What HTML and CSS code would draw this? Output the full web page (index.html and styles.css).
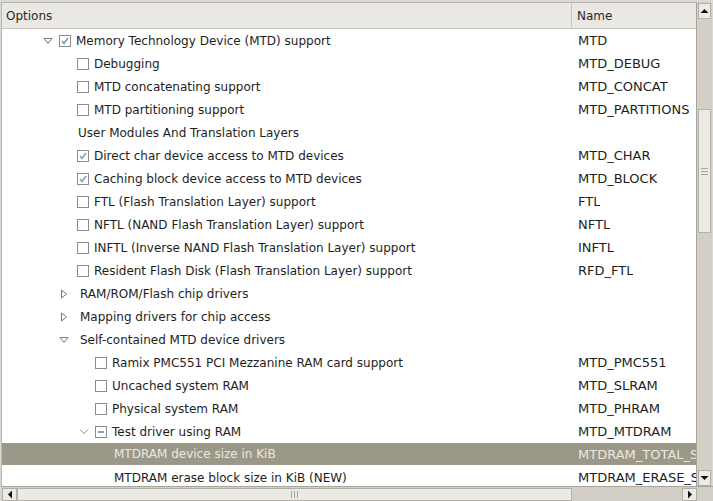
FILE: index.html
```html
<!DOCTYPE html>
<html>
<head>
<meta charset="utf-8">
<link rel="stylesheet" href="styles.css">
</head>
<body>
<div class="window">
  <div class="main">
    <div class="table">
      <div class="head">
        <div class="hcell opt">Options</div>
        <div class="hcell name">Name</div>
      </div>
      <div class="rows">
        <div class="row"><div class="opt r1"><span class="exp"><svg width="10" height="8" viewBox="0 0 10 8"><path d="M1 1.5 H9 L5 6.5 Z" fill="#fff" stroke="#777" stroke-width="1"/></svg></span><span class="cb on"><svg width="10" height="10" viewBox="0 0 10 10"><path d="M2 5 L4 7.5 L8 2" fill="none" stroke="#7d95b8" stroke-width="1.6"/></svg></span><span class="lab">Memory Technology Device (MTD) support</span></div><div class="name">MTD</div></div>
        <div class="row"><div class="opt l2"><span class="cb"></span><span class="lab">Debugging</span></div><div class="name">MTD_DEBUG</div></div>
        <div class="row"><div class="opt l2"><span class="cb"></span><span class="lab">MTD concatenating support</span></div><div class="name">MTD_CONCAT</div></div>
        <div class="row"><div class="opt l2"><span class="cb"></span><span class="lab">MTD partitioning support</span></div><div class="name">MTD_PARTITIONS</div></div>
        <div class="row"><div class="opt l2t"><span class="lab">User Modules And Translation Layers</span></div><div class="name"></div></div>
        <div class="row"><div class="opt l2"><span class="cb on"><svg width="10" height="10" viewBox="0 0 10 10"><path d="M2 5 L4 7.5 L8 2" fill="none" stroke="#8f9cae" stroke-width="1.6"/></svg></span><span class="lab">Direct char device access to MTD devices</span></div><div class="name">MTD_CHAR</div></div>
        <div class="row"><div class="opt l2"><span class="cb on"><svg width="10" height="10" viewBox="0 0 10 10"><path d="M2 5 L4 7.5 L8 2" fill="none" stroke="#8f9cae" stroke-width="1.6"/></svg></span><span class="lab">Caching block device access to MTD devices</span></div><div class="name">MTD_BLOCK</div></div>
        <div class="row"><div class="opt l2"><span class="cb"></span><span class="lab">FTL (Flash Translation Layer) support</span></div><div class="name">FTL</div></div>
        <div class="row"><div class="opt l2"><span class="cb"></span><span class="lab">NFTL (NAND Flash Translation Layer) support</span></div><div class="name">NFTL</div></div>
        <div class="row"><div class="opt l2"><span class="cb"></span><span class="lab">INFTL (Inverse NAND Flash Translation Layer) support</span></div><div class="name">INFTL</div></div>
        <div class="row"><div class="opt l2"><span class="cb"></span><span class="lab">Resident Flash Disk (Flash Translation Layer) support</span></div><div class="name">RFD_FTL</div></div>
        <div class="row"><div class="opt l2e"><span class="exp2"><svg width="8" height="10" viewBox="0 0 8 10"><path d="M1.5 1 V9 L6.5 5 Z" fill="#fff" stroke="#777" stroke-width="1"/></svg></span><span class="lab">RAM/ROM/Flash chip drivers</span></div><div class="name"></div></div>
        <div class="row"><div class="opt l2e"><span class="exp2"><svg width="8" height="10" viewBox="0 0 8 10"><path d="M1.5 1 V9 L6.5 5 Z" fill="#fff" stroke="#777" stroke-width="1"/></svg></span><span class="lab">Mapping drivers for chip access</span></div><div class="name"></div></div>
        <div class="row"><div class="opt l2e"><span class="exp2"><svg width="10" height="8" viewBox="0 0 10 8"><path d="M1 1.5 H9 L5 6.5 Z" fill="#fff" stroke="#777" stroke-width="1"/></svg></span><span class="lab">Self-contained MTD device drivers</span></div><div class="name"></div></div>
        <div class="row"><div class="opt l3"><span class="cb"></span><span class="lab">Ramix PMC551 PCI Mezzanine RAM card support</span></div><div class="name">MTD_PMC551</div></div>
        <div class="row"><div class="opt l3"><span class="cb"></span><span class="lab">Uncached system RAM</span></div><div class="name">MTD_SLRAM</div></div>
        <div class="row"><div class="opt l3"><span class="cb"></span><span class="lab">Physical system RAM</span></div><div class="name">MTD_PHRAM</div></div>
        <div class="row"><div class="opt l3e"><span class="exp3"><svg width="10" height="8" viewBox="0 0 10 8"><path d="M1 1.5 L5 5.5 L9 1.5" fill="none" stroke="#888" stroke-width="1"/></svg></span><span class="cb on"><svg width="10" height="10" viewBox="0 0 10 10"><path d="M2 5 H8" fill="none" stroke="#6f86a8" stroke-width="1.6"/></svg></span><span class="lab">Test driver using RAM</span></div><div class="name">MTD_MTDRAM</div></div>
        <div class="row sel"><div class="opt l3t"><span class="lab">MTDRAM device size in KiB</span></div><div class="name">MTDRAM_TOTAL_SIZE</div></div>
        <div class="row"><div class="opt l3t"><span class="lab">MTDRAM erase block size in KiB (NEW)</span></div><div class="name">MTDRAM_ERASE_SIZE</div></div>
      </div>
    </div>
    <div class="vscroll">
      <div class="btn"><svg width="9" height="6" viewBox="0 0 9 6"><path d="M0.5 5 L4.5 1 L8.5 5 Z" fill="#111"/></svg></div>
      <div class="vtrack">
        <div class="vthumb"><span class="grip-h"></span><span class="grip-h"></span><span class="grip-h"></span></div>
      </div>
      <div class="btn"><svg width="9" height="6" viewBox="0 0 9 6"><path d="M0.5 1 L4.5 5 L8.5 1 Z" fill="#111"/></svg></div>
    </div>
  </div>
  <div class="hscroll">
    <div class="hbtn"><svg width="6" height="9" viewBox="0 0 6 9"><path d="M5 0.5 L1 4.5 L5 8.5 Z" fill="#111"/></svg></div>
    <div class="htrack">
      <div class="hthumb"><span class="grip-v"></span><span class="grip-v"></span><span class="grip-v"></span></div>
    </div>
    <div class="hbtn"><svg width="6" height="9" viewBox="0 0 6 9"><path d="M1 0.5 L5 4.5 L1 8.5 Z" fill="#111"/></svg></div>
    <div class="corner"></div>
  </div>
</div>
</body>
</html>
```

FILE: styles.css
```css
html, body {
  margin: 0;
  padding: 0;
  background: #dcd9d3;
}
.window {
  width: 713px;
  height: 501px;
  box-sizing: border-box;
  padding: 2px 0 0 1px;
  background: #dcd9d3;
  display: flex;
  flex-direction: column;
  font-family: "DejaVu Sans", sans-serif;
  font-size: 12px;
  color: #1e1e1e;
  overflow: hidden;
}
.main {
  display: flex;
  height: 484px;
}
.table {
  width: 695px;
  box-sizing: border-box;
  border-left: 1px solid #b9b6ae;
  border-top: 1px solid #b9b6ae;
  background: #fff;
  overflow: hidden;
  display: flex;
  flex-direction: column;
}
.head {
  display: flex;
  height: 26px;
  flex: none;
  background: #eae8e4;
  border-bottom: 1px solid #c7c4bc;
  box-sizing: border-box;
}
.hcell {
  display: flex;
  align-items: center;
  color: #2a2a2a;
}
.hcell.opt {
  width: 570px;
  padding-left: 4px;
  box-sizing: border-box;
  border-right: 1px solid #c9c6be;
}
.hcell.name {
  padding-left: 5px;
}
.rows {
  flex: 1;
  overflow: hidden;
}
.row {
  display: flex;
  height: 23px;
  align-items: center;
  white-space: nowrap;
}
.row .opt {
  width: 570px;
  flex: none;
  display: flex;
  align-items: center;
  box-sizing: border-box;
}
.row .name {
  padding-left: 6px;
  overflow: hidden;
  white-space: nowrap;
  font-size: 13px;
}
.row.sel {
  background: #9b9889;
  color: #e9e8e0;
  height: 22px;
  margin-bottom: 1px;
}
.r1 { padding-left: 38px; }
.l2 { padding-left: 75px; }
.l2t { padding-left: 76px; }
.l2e { padding-left: 54px; }
.l3 { padding-left: 93px; }
.l3e { padding-left: 74px; }
.l3t { padding-left: 112px; }
.exp, .exp2, .exp3 {
  width: 16px;
  height: 12px;
  display: flex;
  align-items: center;
  justify-content: center;
}
.exp { margin-right: 3px; }
.exp2 { margin-right: 8px; }
.exp3 { margin-right: 3px; }
.cb {
  width: 12px;
  height: 12px;
  box-sizing: border-box;
  border: 1px solid #8b8b8b;
  background: #fff;
  margin-right: 5px;
  display: flex;
  align-items: center;
  justify-content: center;
}
.lab { line-height: 14px; }
.vscroll {
  width: 16px;
  box-sizing: border-box;
  border-left: 1px solid #a8a59d;
  background: #d3cfc7;
  display: flex;
  flex-direction: column;
}
.btn {
  height: 16px;
  flex: none;
  background: #eceae6;
  border: 1px solid #b3b0a8;
  box-sizing: border-box;
  margin: 1px 1px 0 1px;
  display: flex;
  align-items: center;
  justify-content: center;
}
.vtrack {
  flex: 1;
  padding-top: 90px;
}
.vthumb {
  height: 124px;
  margin: 0 1px;
  background: #eceae6;
  border: 1px solid #b3b0a8;
  box-sizing: border-box;
  display: flex;
  flex-direction: column;
  align-items: center;
  justify-content: center;
  gap: 2px;
}
.grip-h {
  width: 7px;
  height: 1px;
  background: #a9a69f;
}
.hscroll {
  display: flex;
  height: 15px;
  border-top: 1px solid #a8a59d;
  background: #d3cfc7;
}
.hbtn {
  width: 15px;
  flex: none;
  background: #eceae6;
  border: 1px solid #b3b0a8;
  box-sizing: border-box;
  margin: 1px 0 0 1px;
  display: flex;
  align-items: center;
  justify-content: center;
}
.htrack {
  flex: 1;
  display: flex;
}
.hthumb {
  width: 555px;
  margin-top: 1px;
  background: #eceae6;
  border: 1px solid #b3b0a8;
  box-sizing: border-box;
  display: flex;
  align-items: center;
  justify-content: center;
  gap: 2px;
}
.grip-v {
  width: 1px;
  height: 7px;
  background: #a9a69f;
}
.corner {
  width: 16px;
  flex: none;
  background: #d3cfc7;
}
```
